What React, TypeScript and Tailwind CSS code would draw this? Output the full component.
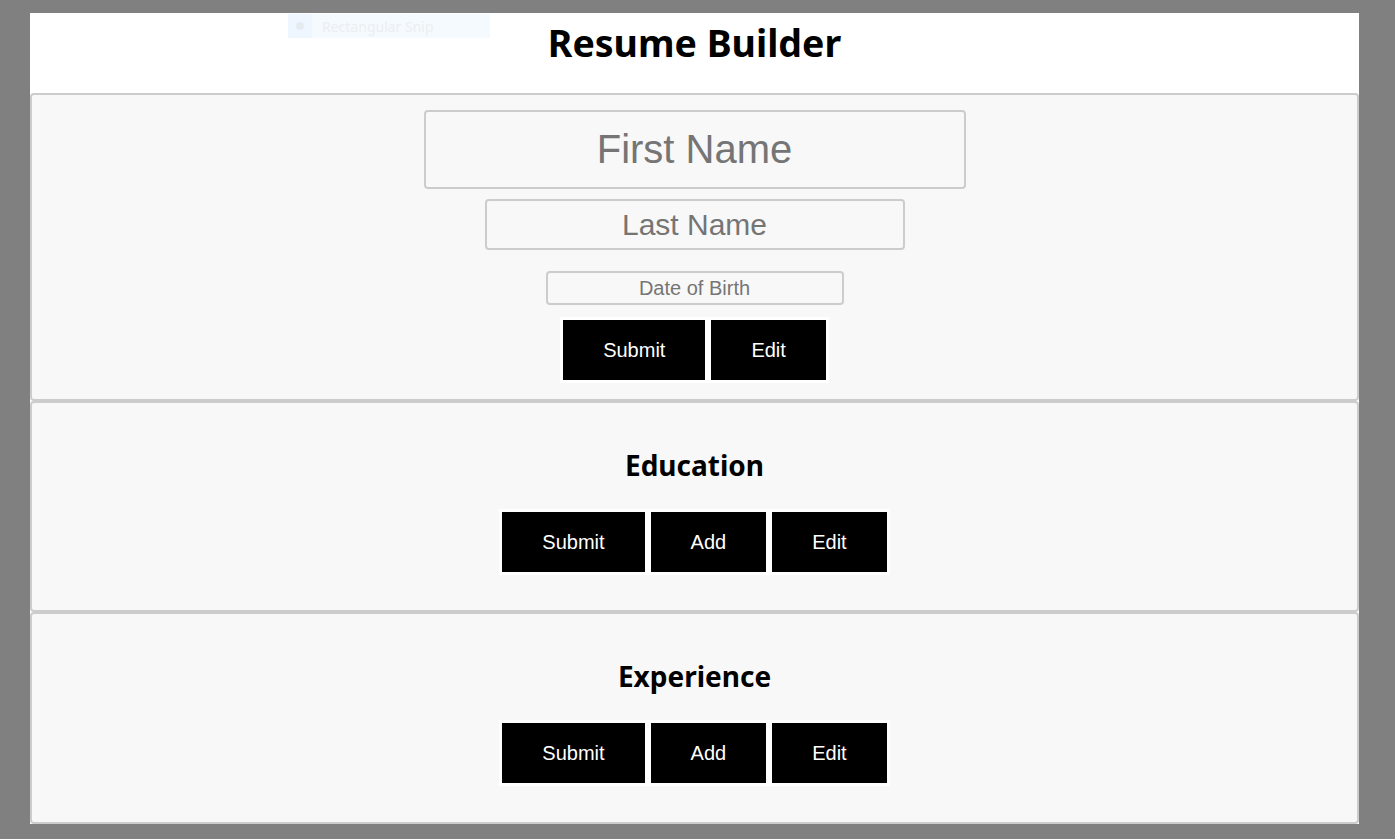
import React from "react";

function Btn({ label }: { label: string }) {
  return (
    <button
      type="button"
      className="h-[66px] border-[3px] border-white bg-black px-[40px] text-[20px] leading-[23px] text-white"
      style={{ fontFamily: '"Liberation Sans", Arial, sans-serif' }}
    >
      {label}
    </button>
  );
}

function Section({ title, buttons, tall }: { title: string; buttons: string[]; tall?: boolean }) {
  return (
    <div
      className={
        tall
          ? "flex h-[212px] flex-col items-center rounded-[4px] border-2 border-[#cccccc] bg-[#f8f8f8]"
          : "flex h-[211px] flex-col items-center rounded-[4px] border-2 border-[#cccccc] bg-[#f8f8f8]"
      }
    >
      <h2
        className="mt-[44px] text-[28px] font-bold leading-[36px] text-black"
        style={{ fontFamily: '"Noto Sans", "Open Sans", sans-serif' }}
      >
        {title}
      </h2>
      <div className="mt-[26px] flex">
        {buttons.map((b) => (
          <Btn key={b} label={b} />
        ))}
      </div>
    </div>
  );
}

export default function App() {
  const arial = { fontFamily: '"Liberation Sans", Arial, sans-serif' };
  return (
    <div className="h-[839px] w-full overflow-hidden bg-[#808080] pl-[30px] pt-[13px]">
      <div className="relative flex h-[811px] w-[1329px] flex-col bg-white">
        <div className="absolute left-[258px] top-[1px] flex h-[24px] w-[202px] items-center bg-[#f5faff]">
          <div className="flex h-full w-[24px] items-center justify-center bg-[#eef6ff]">
            <div className="h-[8px] w-[8px] rounded-full bg-[#e6ebf0]" />
          </div>
          <span
            className="ml-[10px] text-[14px] text-[#eceef1]"
            style={{ fontFamily: '"Noto Sans", sans-serif' }}
          >
            Rectangular Snip
          </span>
        </div>
        <div className="flex h-[80px] justify-center">
          <h1
            className="mt-[6px] text-[37.5px] font-bold leading-[48px] text-black"
            style={{ fontFamily: '"Noto Sans", "Open Sans", sans-serif' }}
          >
            Resume Builder
          </h1>
        </div>
        <div className="flex h-[308px] flex-col items-center rounded-[4px] border-2 border-[#cccccc] bg-[#f8f8f8]">
          <input
            placeholder="First Name"
            className="mt-[15px] h-[79px] w-[542px] rounded-[4px] border-2 border-[#cccccc] bg-transparent text-center text-[40px] outline-none placeholder:text-[#757575]"
            style={arial}
          />
          <input
            placeholder="Last Name"
            className="mt-[10px] h-[51px] w-[420px] rounded-[4px] border-2 border-[#cccccc] bg-transparent text-center text-[30px] outline-none placeholder:text-[#757575]"
            style={arial}
          />
          <input
            placeholder="Date of Birth"
            className="mt-[21px] h-[34px] w-[298px] rounded-[4px] border-2 border-[#cccccc] bg-transparent text-center text-[20px] outline-none placeholder:text-[#757575]"
            style={arial}
          />
          <div className="mt-[12px] flex">
            <Btn label="Submit" />
            <Btn label="Edit" />
          </div>
        </div>
        <Section title="Education" buttons={["Submit", "Add", "Edit"]} />
        <Section title="Experience" buttons={["Submit", "Add", "Edit"]} tall />
      </div>
    </div>
  );
}
